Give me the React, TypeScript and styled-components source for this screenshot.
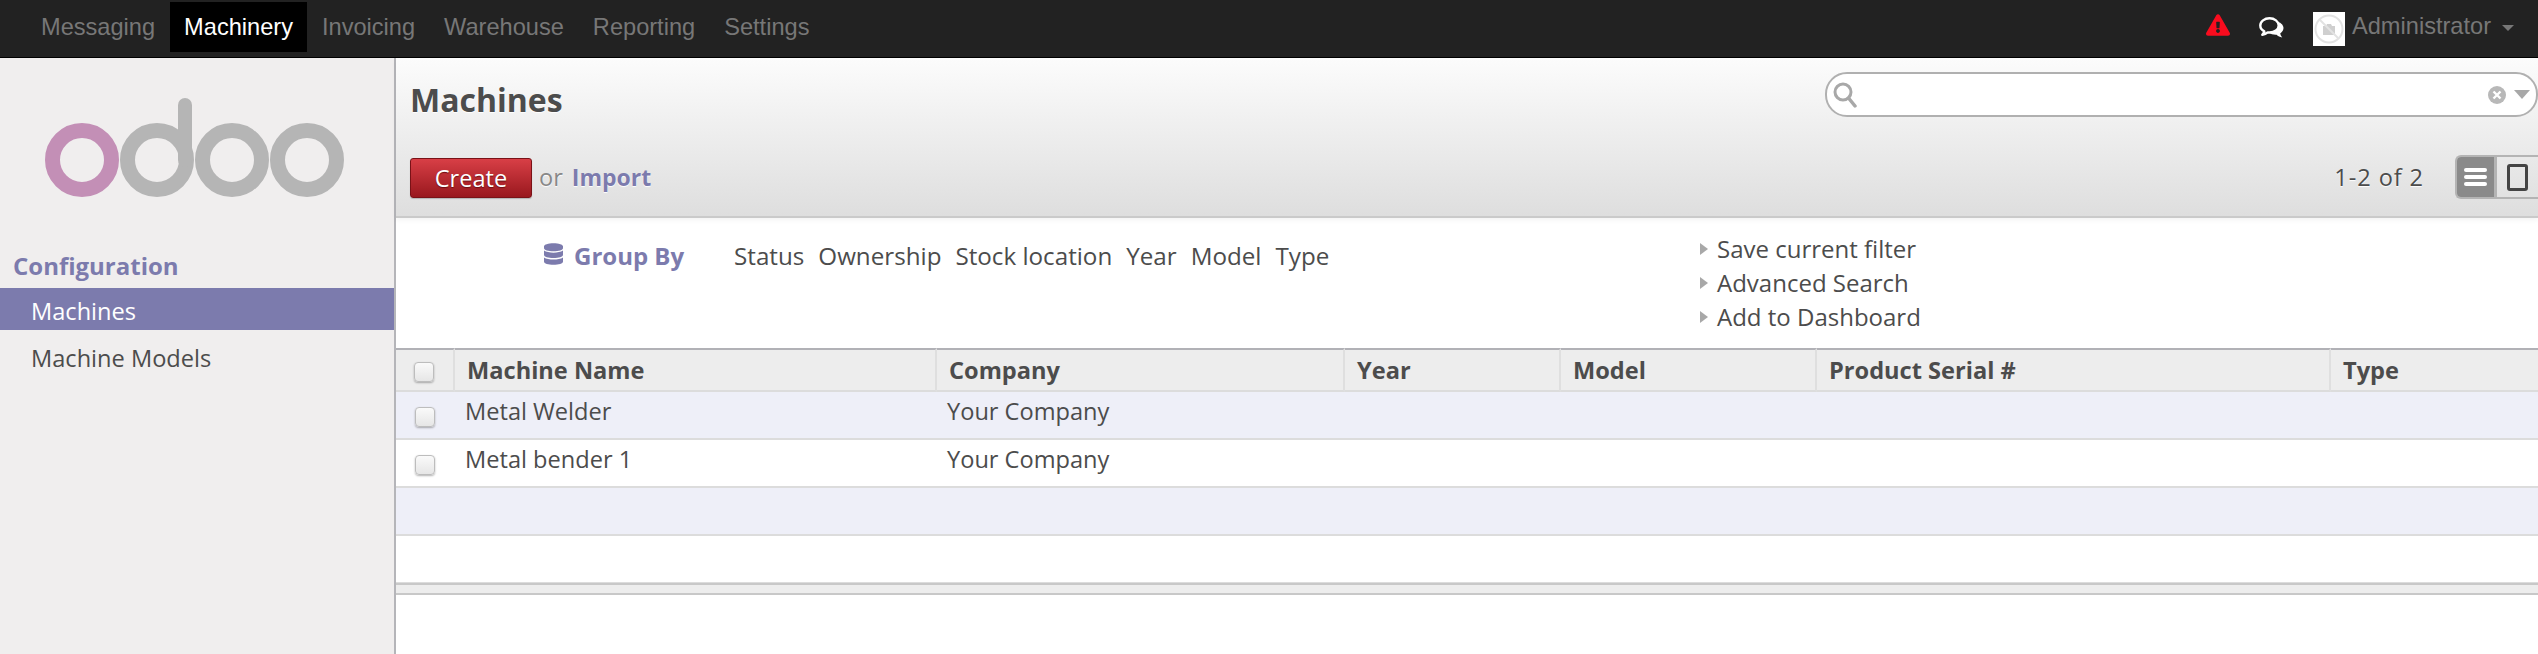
import React from 'react';
import styled, { createGlobalStyle } from 'styled-components';
import { FaExclamationTriangle, FaDatabase } from 'react-icons/fa';

const Global = createGlobalStyle`
  html, body { margin: 0; padding: 0; background: #fff; }
  * { box-sizing: border-box; }
`;
const UI = `"Open Sans", "DejaVu Sans", sans-serif`;
const NAV = `"Liberation Sans", Arial, sans-serif`;

const Page = styled.div`
  width: 2538px; height: 654px; overflow: hidden;
  display: flex; flex-direction: column;
  font-family: ${UI}; font-size: 23.6px; color: #4c4c4c;
`;
const Navbar = styled.header`
  height: 58px; flex: none;
  background: #222; border-bottom: 1px solid #000;
  display: flex; align-items: flex-start;
  padding: 2px 24px 0 27px;
  font-family: ${NAV}; font-size: 23.6px;
`;
const NavMenu = styled.nav`display: flex; gap: 1px;`;
const NavItem = styled.a<{ $active?: boolean }>`
  height: 50px; padding: 0 14px; line-height: 50px;
  color: ${p => (p.$active ? '#fff' : '#777')};
  background: ${p => (p.$active ? '#000' : 'transparent')};
`;
const NavRight = styled.div`
  margin-left: auto; display: flex; align-items: flex-start; color: #777;
`;
const AlertIcon = styled(FaExclamationTriangle)`
  width: 24px; height: 22px; color: #f90c1e; margin-top: 12px;
`;
const ChatSvg = styled.svg`
  width: 25px; height: 22px; margin: 15px 29px 0 29px; display: block;
`;
const Avatar = styled.span`
  width: 32px; height: 34px; margin-top: 10px; background: #fff;
  display: flex; align-items: center; justify-content: center;
`;
const UserName = styled.span`margin-left: 7px; line-height: 48px;`;
const UserCaret = styled.span`
  width: 0; height: 0; margin: 23px 0 0 11px;
  border-left: 6px solid transparent; border-right: 6px solid transparent;
  border-top: 6px solid #777;
`;
const Body = styled.div`flex: 1; display: flex; min-height: 0;`;
const Sidebar = styled.aside`
  width: 396px; flex: none; background: #f0eeee;
  border-right: 2px solid #b5b5b9;
`;
const LogoWrap = styled.div`
  height: 193px; padding: 40px 0 0 45px;
  svg { display: block; filter: blur(0.6px); }
`;
const MenuHead = styled.div`
  color: #7c7bad; font-weight: 700; font-size: 24px; line-height: 30px;
  padding-left: 13px; height: 37px;
`;
const MenuItem = styled.div<{ $active?: boolean }>`
  height: 42px; line-height: 46px; padding-left: 31px; margin-bottom: 5px;
  color: ${p => (p.$active ? '#fff' : '#4c4c4c')};
  background: ${p => (p.$active ? '#7c7bad' : 'transparent')};
`;
const Main = styled.main`flex: 1; min-width: 0; display: flex; flex-direction: column;`;
const Header = styled.div`
  height: 160px; flex: none;
  background: linear-gradient(#fcfcfc, #dedede);
  border-bottom: 2px solid #cacaca;
  box-shadow: 0 2px 5px rgba(0,0,0,.05);
  display: grid; grid-template-rows: 84px 1fr;
  padding-left: 14px;
  text-shadow: 0 1px 1px #fff;
`;
const HeadRow = styled.div`display: flex; align-items: flex-start;`;
const Title = styled.h1`
  margin: 26px 0 0; font-size: 32px; line-height: 32px; font-weight: 700; color: #4c4c4c;
`;
const SearchBox = styled.div`
  margin: 14px 0 0 auto; width: 713px; height: 45px;
  border: 2px solid #b0b0b0; border-radius: 22px; background: #fff;
  display: flex; align-items: center; padding: 0 6px 0 6px;
  svg { display: block; }
`;
const SearchSpacer = styled.span`flex: 1;`;
const Caret = styled.span`
  width: 0; height: 0; margin-left: 8px;
  border-left: 8px solid transparent; border-right: 8px solid transparent;
  border-top: 9px solid #a8a8a8;
`;
const CreateButton = styled.button`
  margin-top: 16px; width: 122px; height: 40px; padding: 0;
  font: 400 23.6px ${UI}; color: #fff; border-radius: 3px;
  border: 1px solid #7a1217;
  background: linear-gradient(#d83f46, #99181e);
  box-shadow: 0 1px 1px rgba(0,0,0,.2);
  text-shadow: 0 1px 1px #6b0f13;
`;
const OrText = styled.span`margin: 15px 0 0 7px; line-height: 40px; color: #888;`;
const ImportLink = styled.a`
  margin: 15px 0 0 9px; line-height: 40px; color: #7c7bad; font-weight: 700; font-size: 23px;
`;
const Pager = styled.span`margin: 16px 31px 0 auto; line-height: 38px; letter-spacing: 0.9px;`;
const Switch = styled.div`
  margin-top: 13px; width: 83px; height: 44px; display: flex;
  border: 2px solid #b4b4b4; border-right: 0; border-radius: 6px 0 0 6px; overflow: hidden;
`;
const SwitchBtn = styled.div<{ $active?: boolean }>`
  width: ${p => (p.$active ? '40px' : '41px')};
  background: ${p => (p.$active ? '#8a8a8a' : 'transparent')};
  border-right: ${p => (p.$active ? '3px solid #b4b4b4' : '0')};
  display: flex; align-items: center; justify-content: ${p => (p.$active ? 'center' : 'flex-start')};
  padding-left: ${p => (p.$active ? '0' : '10px')};
`;
const Bars = styled.span`
  display: flex; flex-direction: column; gap: 3px; width: 23px;
  i { display: block; height: 4px; border-radius: 2px; background: #fff; }
`;
const CardIcon = styled.span`
  display: block; width: 21px; height: 27px; border: 3px solid #444; border-radius: 3px;
`;
const Filters = styled.section`
  height: 130px; flex: none; display: grid; grid-template-columns: 1304px 1fr;
`;
const GroupCol = styled.div`
  display: flex; align-items: flex-start; padding: 22px 0 0 148px; line-height: 32px;
`;
const GroupIcon = styled(FaDatabase)`width: 19px; height: 24px; color: #7c7bad; margin-top: 2px;`;
const GroupTitle = styled.span`
  margin-left: 11px; width: 160px; color: #7c7bad; font-weight: 700; font-size: 24px;
`;
const GroupOption = styled.span`margin-right: 14px; font-size: 24.2px; white-space: nowrap;`;
const ActionCol = styled.div`padding-top: 14px; display: flex; flex-direction: column;`;
const ActionItem = styled.div`
  height: 34px; line-height: 34px; display: flex; align-items: center; font-size: 24px;
  &::before {
    content: ''; width: 0; height: 0; margin-right: 9px;
    border-top: 6px solid transparent; border-bottom: 6px solid transparent;
    border-left: 8px solid #a8a8a8;
  }
`;
const Table = styled.table`
  width: 2142px; table-layout: fixed; border-collapse: separate; border-spacing: 0;
`;
const Th = styled.th`
  height: 44px; padding: 0 0 0 12px; text-align: left;
  font-size: 23.6px; font-weight: 700; color: #4c4c4c;
  background: #ededed;
  border-top: 2px solid #b1b1b6; border-bottom: 2px solid #dcdcdc; border-right: 2px solid #dfdfdf;
  &:last-child { border-right: 0; }
`;
const CheckTh = styled(Th)`padding: 0 2px 2px 0; text-align: center;`;
const Tr = styled.tr<{ $odd?: boolean }>`
  td { background: ${p => (p.$odd ? '#eeeff8' : '#fff')}; }
`;
const Td = styled.td`
  height: 48px; padding: 3px 0 0 10px; vertical-align: top; line-height: 32px;
  border-bottom: 2px solid #dcdcdc;
`;
const CheckTd = styled(Td)`padding: 0 2px 2px 0; vertical-align: middle; text-align: center;`;
const Check = styled.span`
  display: inline-block; width: 20px; height: 20px; vertical-align: middle;
  border: 1px solid #bdbdbd; border-radius: 4px; background: linear-gradient(#fafafa, #e6e6e6);
  box-shadow: 0 1px 2px rgba(0,0,0,.3);
`;
const TableFoot = styled.div`
  height: 12px; margin-top: -1px; background: #ededed;
  border-top: 2px solid #c8c8c8; border-bottom: 2px solid #c8c8c8;
`;

const cols = [59, 482, 408, 216, 256, 514, 207];
const heads = ['Machine Name', 'Company', 'Year', 'Model', 'Product Serial #', 'Type'];
const rows = [
  ['Metal Welder', 'Your Company'],
  ['Metal bender 1', 'Your Company'],
];
const groups = ['Status', 'Ownership', 'Stock location', 'Year', 'Model', 'Type'];
const actions = ['Save current filter', 'Advanced Search', 'Add to Dashboard'];
const menus = ['Messaging', 'Machinery', 'Invoicing', 'Warehouse', 'Reporting', 'Settings'];

export default function App() {
  return (
    <Page>
      <Global />
      <Navbar>
        <NavMenu>
          {menus.map(m => <NavItem key={m} $active={m === 'Machinery'}>{m}</NavItem>)}
        </NavMenu>
        <NavRight>
          <AlertIcon />
          <ChatSvg viewBox="0 0 25 22">
            <path d="M17 4.5c4.2.4 7.5 3.2 7.5 6.6 0 2.2-1.3 4.1-3.3 5.3.2 1.4.9 2.6 2 4-2.3-.3-4.3-1.3-5.6-2.7-3 .2-5.8-.6-7.6-2.2z" fill="#fff" />
            <path d="M10.5 1.3c-5 0-9.2 3.2-9.2 7.2 0 2.5 1.6 4.6 4 5.9-.3 1.2-1 2.3-2 3.4 2.2-.3 4.1-1.2 5.4-2.4.6.1 1.2.1 1.8.1 5 0 9.2-3 9.2-7s-4.2-7.2-9.2-7.2z" fill="#222" stroke="#fff" strokeWidth="2.4" strokeLinejoin="round" />
          </ChatSvg>
          <Avatar>
            <svg width="30" height="30" viewBox="0 0 30 30" fill="none">
              <circle cx="15" cy="15" r="13.5" stroke="#e2e2e2" strokeWidth="2" />
              <path d="M9 12h3l1-2h4l1 2h3v9H9z" fill="#cfcfcf" />
              <path d="M6 6 L24 24" stroke="#e2e2e2" strokeWidth="2" />
            </svg>
          </Avatar>
          <UserName>Administrator</UserName>
          <UserCaret />
        </NavRight>
      </Navbar>
      <Body>
        <Sidebar>
          <LogoWrap>
            <svg width="300" height="100" viewBox="0 0 300 100">
              <circle cx="37" cy="62" r="29.5" fill="none" stroke="#c38fb6" strokeWidth="15" />
              <circle cx="112" cy="62" r="29.5" fill="none" stroke="#b5b5b5" strokeWidth="15" />
              <path d="M140 62 V7" fill="none" stroke="#b5b5b5" strokeWidth="14" strokeLinecap="round" />
              <circle cx="187" cy="62" r="29.5" fill="none" stroke="#b5b5b5" strokeWidth="15" />
              <circle cx="262" cy="62" r="29.5" fill="none" stroke="#b5b5b5" strokeWidth="15" />
            </svg>
          </LogoWrap>
          <MenuHead>Configuration</MenuHead>
          <MenuItem $active>Machines</MenuItem>
          <MenuItem>Machine Models</MenuItem>
        </Sidebar>
        <Main>
          <Header>
            <HeadRow>
              <Title>Machines</Title>
              <SearchBox>
                <svg width="26" height="26" viewBox="0 0 26 26" fill="none">
                  <circle cx="10" cy="10" r="8" stroke="#a8a8a8" strokeWidth="3" />
                  <path d="M15.5 16 L22 24" stroke="#a8a8a8" strokeWidth="3.5" strokeLinecap="round" />
                </svg>
                <SearchSpacer />
                <svg width="18" height="18" viewBox="0 0 18 18">
                  <circle cx="9" cy="9" r="9" fill="#b8b8b8" />
                  <path d="M5.5 5.5 L12.5 12.5 M12.5 5.5 L5.5 12.5" stroke="#fff" strokeWidth="2.4" />
                </svg>
                <Caret />
              </SearchBox>
            </HeadRow>
            <HeadRow>
              <CreateButton>Create</CreateButton>
              <OrText>or</OrText>
              <ImportLink>Import</ImportLink>
              <Pager>1-2 of 2</Pager>
              <Switch>
                <SwitchBtn $active><Bars><i /><i /><i /></Bars></SwitchBtn>
                <SwitchBtn><CardIcon /></SwitchBtn>
              </Switch>
            </HeadRow>
          </Header>
          <Filters>
            <GroupCol>
              <GroupIcon />
              <GroupTitle>Group By</GroupTitle>
              {groups.map(g => <GroupOption key={g}>{g}</GroupOption>)}
            </GroupCol>
            <ActionCol>
              {actions.map(a => <ActionItem key={a}>{a}</ActionItem>)}
            </ActionCol>
          </Filters>
          <Table>
            <colgroup>{cols.map((w, i) => <col key={i} width={w} />)}</colgroup>
            <thead>
              <tr>
                <CheckTh><Check /></CheckTh>
                {heads.map(h => <Th key={h}>{h}</Th>)}
              </tr>
            </thead>
            <tbody>
              {rows.map((r, i) => (
                <Tr key={i} $odd={i % 2 === 0}>
                  <CheckTd><Check /></CheckTd>
                  <Td>{r[0]}</Td>
                  <Td>{r[1]}</Td>
                  <Td colSpan={4} />
                </Tr>
              ))}
              <Tr $odd><Td colSpan={7} /></Tr>
              <Tr><Td colSpan={7} /></Tr>
            </tbody>
          </Table>
          <TableFoot />
        </Main>
      </Body>
    </Page>
  );
}
